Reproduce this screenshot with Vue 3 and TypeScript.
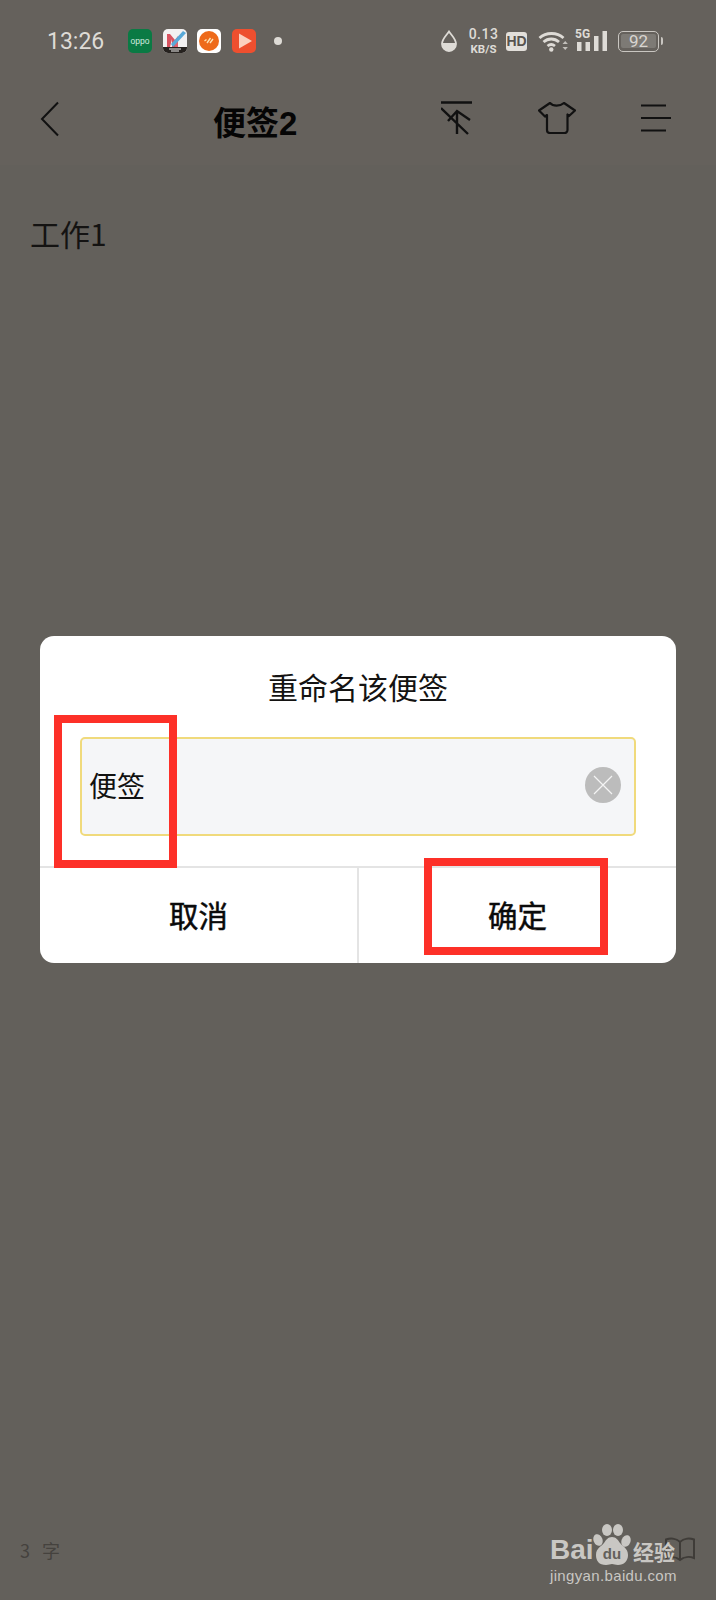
<template>
  <div class="page">
    <header class="top">
      <div class="status-bar">
        <span class="time">13:26</span>
        <div class="app-icons">
          <svg class="app" viewBox="0 0 24 24">
            <rect width="24" height="24" rx="5" fill="#0a7a44" />
            <text x="12" y="14.500" text-anchor="middle" class="oppo-text">oppo</text>
          </svg>
          <svg class="app" viewBox="0 0 24 24">
            <rect width="24" height="24" rx="5" fill="#f3f1f1" />
            <path d="M4 5h3l5 6V18H9V10l-2 8H4z" fill="#d8525f" />
            <path d="M12 11l3-4v11h-3z" fill="#e0606c" />
            <path d="M8 15L20 2l3 2L10 18z" fill="#58a9d8" />
            <path d="M0 18h24v1a5 5 0 0 1-5 5H5a5 5 0 0 1-5-5z" fill="#26221f" />
            <path d="M6 20h12M8 22h8" stroke="#eee" stroke-width="1" />
          </svg>
          <svg class="app" viewBox="0 0 24 24">
            <rect width="24" height="24" rx="5" fill="#fff" />
            <circle cx="12" cy="12" r="10" fill="#ee6a1a" />
            <path d="M7.500 12l2-1.500M10 14l3.500-5M13 14l3-4" stroke="#fde3b5" stroke-width="1.400" />
          </svg>
          <svg class="app" viewBox="0 0 24 24">
            <rect width="24" height="24" rx="5" fill="#ee4f2f" />
            <path d="M7 4.500l13 7.500-13 7.500z" fill="#fbd0c0" />
          </svg>
          <i class="dot"></i>
        </div>
        <div class="status-right">
          <svg class="drop" viewBox="0 0 16 22">
            <path d="M8 1.500C5 6 1 9 1 14a7 7 0 0 0 14 0C15 9 11 6 8 1.500z" fill="none" stroke="#dedbd6" stroke-width="1.800" />
            <path d="M1 13h14v1a7 7 0 0 1-14 0z" fill="#dedbd6" />
          </svg>
          <div class="speed">
            <span class="speed-num">0.13</span>
            <span class="speed-unit">KB/S</span>
          </div>
          <span class="hd">HD</span>
          <svg class="wifi" viewBox="0 0 30 22">
            <path d="M1.500 8C8 2 19 2 25.500 8M5.500 12c4.500-4 11-4 15.500 0M9.500 16c2.500-2 5-2 7.500 0" fill="none" stroke="#dedbd6" stroke-width="2.800" />
            <circle cx="13.300" cy="19.500" r="2.200" fill="#dedbd6" />
            <path d="M24.500 14l2.700-3 2.700 3zM24.500 17h5.400l-2.700 3z" fill="#c2bfba" />
          </svg>
          <div class="signal">
            <span class="five-g">5G</span>
            <svg class="bars" viewBox="0 0 32 22">
              <path d="M2 12h4.500v9H2zM10.500 12H15v9h-4.500zM19 6h4.500v15H19zM27.500 1H32v20h-4.500z" fill="#dedbd6" />
            </svg>
          </div>
          <div class="battery">
            <div class="battery-body">
              <span class="battery-level">92</span>
            </div>
            <i class="battery-tip"></i>
          </div>
        </div>
      </div>
      <nav class="nav-bar">
        <svg class="back" viewBox="0 0 20 36">
          <path d="M18 1.500L2 18l16 16.500" fill="none" stroke="#111" stroke-width="2" />
        </svg>
        <h1 class="nav-title">便签2</h1>
        <div class="nav-actions">
          <svg class="pin" viewBox="0 0 32 34">
            <path d="M0 1.500h31M16 10v23M7 20l9-10 13 9M0 7l27 26" fill="none" stroke="#111" stroke-width="2.400" />
          </svg>
          <svg class="shirt" viewBox="0 0 38 32">
            <path d="M12 1c3 3.500 10 3.500 14 0l11 7.500-6 5.500-1.500-1.500V28a3 3 0 0 1-3 3H12a3 3 0 0 1-3-3V13L7 14.500 1 8.500z" fill="none" stroke="#111" stroke-width="2.200" stroke-linejoin="round" />
          </svg>
          <svg class="menu" viewBox="0 0 30 28">
            <path d="M0 1.500h25M0 14h30M0 26.500h25" fill="none" stroke="#111" stroke-width="2" />
          </svg>
        </div>
      </nav>
    </header>

    <main class="content">工作1</main>

    <footer class="bottom">
      <span class="count">3 字</span>
      <svg class="book" viewBox="0 0 32 26">
        <path d="M16 5C12 1 6 1 2 2.500V21c4-1.500 10-1.500 14 2 4-3.500 10-3.500 14-2V2.500C26 1 20 1 16 5zM16 5v18" fill="none" stroke="#3f3c38" stroke-width="2" />
      </svg>
    </footer>

    <div class="watermark">
      <div class="wm-top">
        <span class="wm-bai">Bai</span>
        <svg class="wm-paw" viewBox="0 0 38 41">
          <ellipse cx="5" cy="16" rx="4.500" ry="6" fill="#c9c7c3" transform="rotate(-20 5 16)" />
          <ellipse cx="14" cy="6" rx="5" ry="6" fill="#c9c7c3" />
          <ellipse cx="25" cy="6" rx="5" ry="6" fill="#c9c7c3" />
          <ellipse cx="33" cy="17" rx="4.500" ry="6" fill="#c9c7c3" transform="rotate(20 33 17)" />
          <path d="M19 13c4 0 6 3 8 6 2 3 8 5 8 12 0 6-4 10-10 10-3 0-4-1-6-1s-3 1-6 1c-7 0-10-4-10-10 0-7 6-9 8-12s4-6 8-6z" fill="#c9c7c3" />
          <text x="19" y="35" text-anchor="middle" class="wm-du">du</text>
        </svg>
        <span class="wm-cn">经验</span>
      </div>
      <div class="wm-url">jingyan.baidu.com</div>
    </div>

    <div class="overlay">
      <div class="dialog">
        <div class="dialog-title">重命名该便签</div>
        <div class="dialog-body">
          <div class="name-input">
            <span class="name-text">{{ noteName }}</span>
            <span class="clear-btn">
              <svg viewBox="0 0 36 36">
                <circle cx="18" cy="18" r="18" fill="#bcbcbc" />
                <path d="M9 9l18 18M27 9L9 27" stroke="#f4f4f4" stroke-width="1.200" />
              </svg>
            </span>
          </div>
        </div>
        <div class="dialog-actions">
          <div class="action">取消</div>
          <div class="action">确定</div>
        </div>
        <i class="mark mark-input"></i>
        <i class="mark mark-ok"></i>
      </div>
    </div>
  </div>
</template>

<script setup lang="ts">
import { ref } from 'vue'

const noteName = ref('便签')
</script>

<style>
body {
  background: #63605b;
}
</style>

<style scoped>
.page {
  position: relative;
  display: flex;
  flex-direction: column;
  width: 716px;
  height: 1600px;
  overflow: hidden;
  background: #63605b;
  font-family: "Noto Sans CJK SC", "Noto Sans", sans-serif;
  color: #141312;
}

/* status bar */
.top {
  height: 165px;
  background: #65615c;
}
.status-bar {
  display: flex;
  align-items: center;
  height: 82px;
  padding-left: 47px;
  color: #dedbd6;
}
.time {
  width: 81px;
  font-family: Roboto, sans-serif;
  font-size: 23px;
}
.app-icons {
  display: flex;
  align-items: center;
  gap: 10.500px;
}
.app {
  width: 24px;
  height: 24px;
}
.oppo-text {
  font-family: "Liberation Sans", sans-serif;
  font-size: 8.500px;
  fill: #d6eee0;
}
.dot {
  width: 8px;
  height: 8px;
  margin-left: 8px;
  border-radius: 50%;
  background: #dedbd6;
}
.status-right {
  display: flex;
  align-items: center;
  margin-left: 159px;
}
.drop {
  width: 16px;
  height: 22px;
}
.speed {
  display: flex;
  flex-direction: column;
  align-items: center;
  width: 29px;
  margin-left: 12px;
  font-family: Roboto, sans-serif;
}
.speed-num {
  font-size: 14px;
  font-weight: 500;
  letter-spacing: 0.5px;
  line-height: 16.500px;
}
.speed-unit {
  font-size: 11.500px;
  font-weight: 700;
  line-height: 13.500px;
}
.hd {
  width: 21px;
  height: 19px;
  margin-left: 8px;
  border-radius: 3px;
  background: #e2dfda;
  color: #57534e;
  font-family: "Liberation Sans", sans-serif;
  font-size: 14px;
  font-weight: 700;
  line-height: 19px;
  text-align: center;
}
.wifi {
  width: 30px;
  height: 22px;
  margin-left: 11px;
}
.signal {
  position: relative;
  width: 32px;
  height: 22px;
  margin-left: 7px;
}
.bars {
  display: block;
  width: 32px;
  height: 22px;
}
.five-g {
  position: absolute;
  left: 0;
  top: -2px;
  font-family: Roboto, sans-serif;
  font-size: 12px;
  font-weight: 700;
  line-height: 12px;
}
.battery {
  display: flex;
  align-items: center;
  gap: 2px;
  margin-left: 11px;
}
.battery-body {
  width: 41px;
  height: 21px;
  padding: 2px;
  box-sizing: border-box;
  border: 1.500px solid #c9c6c1;
  border-radius: 5px;
}
.battery-level {
  display: block;
  height: 14px;
  border-radius: 2px;
  background: #7d7a75;
  font-family: Roboto, sans-serif;
  font-size: 17px;
  line-height: 14px;
  text-align: center;
  color: #d8d5d0;
}
.battery-tip {
  width: 2px;
  height: 8px;
  border-radius: 0 2px 2px 0;
  background: #c9c6c1;
}

/* nav bar */
.nav-bar {
  display: flex;
  align-items: center;
  height: 76px;
  padding-left: 40px;
}
.back {
  width: 20px;
  height: 36px;
  margin-top: -2px;
}
.nav-title {
  width: 86px;
  margin: 0 0 0 153px;
  padding-top: 2px;
  font-family: "Liberation Sans", "Noto Sans CJK SC", sans-serif;
  font-size: 33px;
  font-weight: 700;
  white-space: nowrap;
  color: #050505;
}
.nav-actions {
  display: flex;
  align-items: center;
  margin: -4px 0 0 142px;
}
.pin {
  width: 32px;
  height: 34px;
}
.shirt {
  width: 38px;
  height: 32px;
  margin-left: 65px;
}
.menu {
  width: 30px;
  height: 28px;
  margin-left: 65px;
}

/* note */
.content {
  flex: 1;
  padding: 46px 30px 0;
  font-size: 30px;
  line-height: 44px;
}
.bottom {
  display: flex;
  align-items: center;
  justify-content: space-between;
  height: 26px;
  padding: 0 20px 37px;
}
.count {
  font-size: 18px;
  color: #45423e;
  word-spacing: 8px;
}
.book {
  width: 32px;
  height: 26px;
}

/* watermark */
.watermark {
  position: absolute;
  left: 550px;
  top: 1524px;
  width: 130px;
  color: #c9c7c3;
}
.wm-top {
  display: flex;
  align-items: flex-end;
  height: 41px;
}
.wm-bai {
  flex: none;
  width: 42px;
  font-family: "Liberation Sans", sans-serif;
  font-size: 28px;
  font-weight: 700;
  line-height: 30px;
}
.wm-paw {
  flex: none;
  width: 38px;
  height: 41px;
  margin-left: 1px;
}
.wm-du {
  font-family: "Liberation Sans", sans-serif;
  font-size: 15px;
  font-weight: 700;
  fill: #63605b;
}
.wm-cn {
  flex: none;
  margin-left: 2px;
  font-size: 21px;
  font-weight: 700;
  line-height: 28px;
}
.wm-url {
  margin-top: 1px;
  font-family: "Liberation Sans", sans-serif;
  font-size: 15px;
  letter-spacing: 0.350px;
  line-height: 20px;
  white-space: nowrap;
}

/* dialog */
.overlay {
  position: absolute;
  inset: 0;
  padding: 636px 40px 0;
}
.dialog {
  position: relative;
  display: flex;
  flex-direction: column;
  height: 327px;
  border-radius: 14px;
  background: #fff;
}
.dialog-title {
  padding-top: 28px;
  font-size: 30px;
  line-height: 44px;
  text-align: center;
}
.dialog-body {
  padding: 29px 40px 30px;
}
.name-input {
  display: flex;
  align-items: center;
  justify-content: space-between;
  height: 99px;
  padding: 0 13px 0 7px;
  box-sizing: border-box;
  border: 2px solid #f0da7c;
  border-radius: 5px;
  background: #f5f6f8;
}
.name-text {
  margin-top: -4px;
  font-size: 28px;
  line-height: 40px;
  color: #111;
}
.clear-btn {
  width: 36px;
  height: 36px;
  margin-top: -3px;
}
.clear-btn svg {
  display: block;
}
.dialog-actions {
  flex: 1;
  display: grid;
  grid-template-columns: 317px 1fr;
  border-top: 2px solid #e4e4e4;
}
.action {
  display: flex;
  align-items: center;
  justify-content: center;
  padding-bottom: 3px;
  font-size: 29.500px;
  color: #0a0a0a;
  -webkit-text-stroke: 0.5px #0a0a0a;
}
.action + .action {
  border-left: 2px solid #e4e4e4;
}
.mark {
  position: absolute;
  box-sizing: border-box;
  border: 8px solid #fd3028;
}
.mark-input {
  left: 14px;
  top: 79px;
  width: 123px;
  height: 153px;
}
.mark-ok {
  left: 384px;
  top: 222px;
  width: 184px;
  height: 97px;
}
</style>
